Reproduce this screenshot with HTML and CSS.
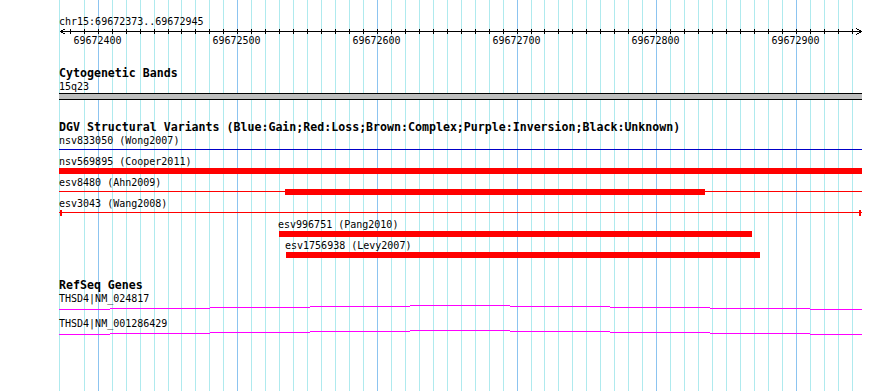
FILE: index.html
```html
<!DOCTYPE html>
<html lang="en">
<head>
    <meta charset="UTF-8">
    <title>chr15:69672373..69672945</title>
    <link rel="stylesheet" href="styles.css">
</head>
<body>

    <div class="browser">
        <svg class="grid" id="grid" width="890" height="391"></svg>

        <div class="tracks">
            <div class="ruler-track">
                <div class="segment-title">chr15:69672373..69672945</div>
                <svg class="ruler" id="ruler" width="803" height="20"></svg>
            </div>

            <section class="track band-track">
                <h2 class="track-title">Cytogenetic Bands</h2>
                <div class="feature-label">15q23</div>
                <div class="band"></div>
            </section>

            <section class="track dgv-track">
                <h2 class="track-title">DGV Structural Variants (Blue:Gain;Red:Loss;Brown:Complex;Purple:Inversion;Black:Unknown)</h2>

                <div class="feature-label">nsv833050 (Wong2007)</div>
                <div class="glyphs"><div class="line blue"></div></div>

                <div class="feature-label">nsv569895 (Cooper2011)</div>
                <div class="glyphs"><div class="bar" style="left:0;width:803px"></div></div>

                <div class="feature-label">esv8480 (Ahn2009)</div>
                <div class="glyphs">
                    <div class="line red"></div>
                    <div class="bar" style="left:226px;width:420px"></div>
                </div>

                <div class="feature-label">esv3043 (Wang2008)</div>
                <div class="glyphs">
                    <div class="line red"></div>
                    <div class="cap" style="left:1px"></div>
                    <div class="cap" style="left:800px"></div>
                </div>

                <div class="feature-label" style="padding-left:219px">esv996751 (Pang2010)</div>
                <div class="glyphs"><div class="bar" style="left:220px;width:473px"></div></div>

                <div class="feature-label" style="padding-left:226px">esv1756938 (Levy2007)</div>
                <div class="glyphs"><div class="bar" style="left:227px;width:474px"></div></div>
            </section>

            <section class="track gene-track">
                <h2 class="track-title">RefSeq Genes</h2>

                <div class="feature-label">THSD4|NM_024817</div>
                <svg class="gene" width="803" height="12">
                    <path d="M0 4.5H51M51 3.5H151M151 2.5H251M251 1.5H351M351 0.5H451M451 1.5H551M551 2.5H651M651 3.5H751M751 4.5H803"></path>
                </svg>

                <div class="feature-label">THSD4|NM_001286429</div>
                <svg class="gene" width="803" height="12">
                    <path d="M0 4.5H51M51 3.5H151M151 2.5H251M251 1.5H351M351 0.5H451M451 1.5H551M551 2.5H651M651 3.5H751M751 4.5H803"></path>
                </svg>
            </section>
        </div>
    </div>

    <script>
        const segStart = 69672373;
        const segEnd = 69672945;
        const padLeft = 60;
        const scale = 800 / (segEnd - segStart + 1);
        const svgNS = 'http://www.w3.org/2000/svg';

        function xpos(p) {
            return Math.round(padLeft + (p - segStart) * scale);
        }

        function addRect(svg, x, y, w, h, cls) {
            const r = document.createElementNS(svgNS, 'rect');
            r.setAttribute('x', x);
            r.setAttribute('y', y);
            r.setAttribute('width', w);
            r.setAttribute('height', h);
            r.setAttribute('class', cls);
            svg.appendChild(r);
        }

        // grid lines every 10 bp, darker every 100 bp
        const grid = document.getElementById('grid');
        addRect(grid, 59, 0, 1, 391, 'minor');
        for (let p = 69672390; p <= segEnd; p += 10) {
            addRect(grid, xpos(p), 0, 1, 391, p % 100 === 0 ? 'major' : 'minor');
        }

        // ruler: line, ticks, arrows, labels (origin at x=59, y=28)
        const ruler = document.getElementById('ruler');
        addRect(ruler, 1, 3, 802, 1, 'axis');
        for (let p = 69672380; p <= segEnd; p += 10) {
            addRect(ruler, xpos(p) - 59, 1, 1, 5, 'axis');
            if (p % 100 === 0) {
                const t = document.createElementNS(svgNS, 'text');
                t.setAttribute('x', xpos(p) - 59.5);
                t.setAttribute('y', 16);
                t.setAttribute('text-anchor', 'middle');
                t.textContent = p;
                ruler.appendChild(t);
            }
        }
        const arrows = document.createElementNS(svgNS, 'path');
        arrows.setAttribute('d', 'M6.5 0.5L1.5 3.5L6.5 6.5M797.5 0.5L802.5 3.5L797.5 6.5');
        arrows.setAttribute('class', 'arrow');
        ruler.appendChild(arrows);
    </script>
</body>
</html>
```

FILE: styles.css
```css
body {
    margin: 0;
    background: #fff;
}
.browser {
    position: relative;
    width: 890px;
    height: 391px;
    overflow: hidden;
    background: #fff;
    font-family: "DejaVu Sans Mono", monospace;
    font-size: 10px;
    color: #000;
}
.grid {
    position: absolute;
    left: 0;
    top: 0;
}
.grid .minor {
    fill: #afeaee;
}
.grid .major {
    fill: #8cc4f0;
}
.tracks {
    position: relative;
    padding-left: 59px;
    padding-top: 15px;
}
.segment-title {
    height: 13px;
    line-height: 13px;
    padding-left: 0;
}
.ruler {
    display: block;
    shape-rendering: crispEdges;
}
.ruler .axis {
    fill: #000;
}
.ruler .arrow {
    fill: none;
    stroke: #000;
    stroke-width: 1;
}
.ruler text {
    font-family: "DejaVu Sans Mono", monospace;
    font-size: 10px;
    fill: #000;
}
.track {
    width: 803px;
}
.band-track {
    margin-top: 19px;
}
.dgv-track {
    margin-top: 21px;
}
.gene-track {
    margin-top: 19px;
}
.track-title {
    margin: 0;
    height: 13px;
    font-size: 11.6px;
    font-weight: bold;
    line-height: 13px;
    white-space: nowrap;
}
.feature-label {
    height: 13px;
    line-height: 13px;
    white-space: nowrap;
}
.band {
    height: 5px;
    border-top: 1px solid #000;
    border-bottom: 1px solid #000;
    background: #bebebe;
}
.glyphs {
    position: relative;
    height: 8px;
}
.bar {
    position: absolute;
    top: 0;
    height: 6px;
    background: #f00;
}
.line {
    position: absolute;
    top: 2px;
    left: 0;
    width: 803px;
    height: 1px;
}
.line.blue {
    background: #0000c8;
}
.line.red {
    background: #f00;
}
.cap {
    position: absolute;
    top: 0;
    width: 2px;
    height: 6px;
    background: #f00;
}
.gene {
    display: block;
    shape-rendering: crispEdges;
}
.gene path {
    fill: none;
    stroke: #f0f;
    stroke-width: 1;
}
```
